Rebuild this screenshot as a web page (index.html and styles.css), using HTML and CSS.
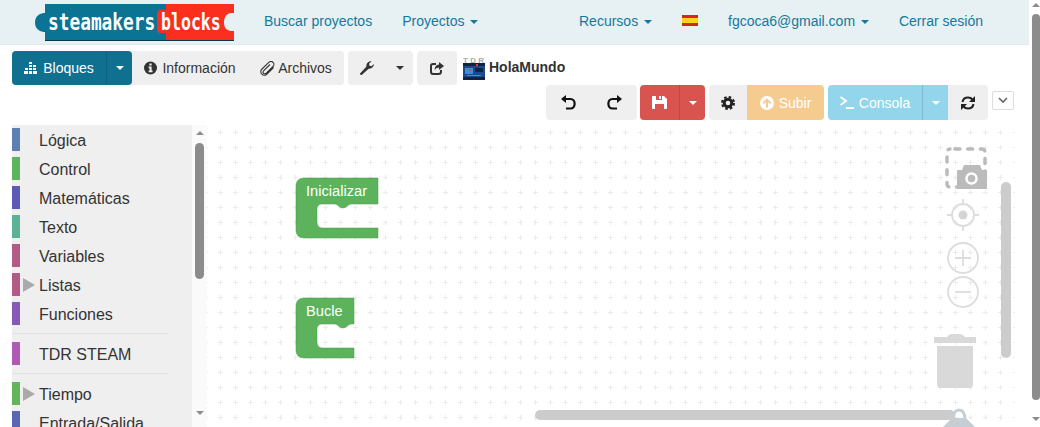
FILE: index.html
```html
<!DOCTYPE html>
<html lang="es">
<head>
    <meta charset="UTF-8">
    <title>Steamakers Blocks</title>
    <link rel="stylesheet" href="styles.css">
</head>
<body>
<div class="page">
    <nav class="navbar">
        <svg class="logo" width="199" height="37" viewBox="35 4 199 37">
            <path fill="#0b7393" d="M45 4H196V41H45V32C41 32 35 30 35 22.500C35 15 41 13 45 13Z"/>
            <path fill="#03394d" d="M45 40H234V41H45Z"/>
            <path fill="#fb2f1e" d="M166 4H234V13H232C226 13 224 18 224 22.500C224 27 226 31 232 31H234V40H166V33H161C158 33 157 31 157 29V15C157 12 158 10 161 10H166Z"/>
            <text class="logo-text" transform="translate(48 29.500) scale(.775 1)">steamakers</text>
            <text class="logo-text" transform="translate(161 29.500) scale(.72 1)">blocks</text>
        </svg>
        <a class="nav-link" href="#">Buscar proyectos</a>
        <a class="nav-link" href="#">Proyectos <span class="caret"></span></a>
        <div class="nav-right">
            <a class="nav-link" href="#">Recursos <span class="caret"></span></a>
            <span class="flag"></span>
            <a class="nav-link" href="#">fgcoca6@gmail.com <span class="caret"></span></a>
            <a class="nav-link" href="#">Cerrar sesión</a>
        </div>
    </nav>

    <div class="toolbar-top">
        <div class="btn-group tabs">
            <div class="btn-group">
                <button class="btn btn-blue btn-bloques">
                    <svg width="13" height="12" viewBox="0 0 13 12" fill="#fff"><path d="M5 0h3v2H5zM5 3h3v2H5zM5 6h3v2H5zM5 9h3v3H5zM1 6h3v2H1zM1 9h3v3H1zM9 3h3v2H9zM9 6h3v2H9zM9 9h3v3H9zM0 9h1v3H0zM12 9h1v3h-1z"/></svg>
                    Bloques
                </button>
                <button class="btn btn-blue btn-split"><span class="caret"></span></button>
            </div>
            <button class="btn btn-info-tab">
                <svg width="13" height="14" viewBox="0 0 14 14"><circle cx="7" cy="7" r="7" fill="#333"/><path fill="#efefef" d="M5.800 2.200h2.400v2H5.800zM5 5.500h3.200v4.300h1V11.500H5V9.800h1V7.200H5z"/></svg>
                Información
            </button>
            <button class="btn btn-files">
                <svg width="15" height="15" viewBox="0 0 15 15" fill="none" stroke="#333" stroke-width="1.100"><path d="M13.500 6.500 6.500 13.500C4.500 15 1 14 .8 11 .7 10 1 9 2 8L8.500 1.700C10 .3 12 .3 13 1.300 14.300 2.600 14 4.500 13 5.500L6.300 12.200C5 13.400 3.200 12.600 3 11.300 3 10.500 3.300 10 4 9.300L10 3.500"/></svg>
                Archivos
            </button>
        </div>
        <div class="btn-group">
            <button class="btn btn-wrench">
                <svg width="14" height="14" viewBox="0 0 14 14" fill="#333"><path d="M0 12.500 6.500 5.600C6 3 8 0 11.500 .3L9 2.800 9.500 4.800 11.500 5.300 13.900 2.900C14 6 11.500 8.200 8.600 7.700L2 13.800C1 14.400-.3 13.500 0 12.500Z"/></svg>
            </button>
            <button class="btn btn-wrench-caret"><span class="caret"></span></button>
        </div>
        <button class="btn btn-export">
            <svg width="14" height="13" viewBox="0 0 14 13" fill="none" stroke="#333" stroke-width="2"><path d="M6 2H3C1.800 2 1 2.800 1 4V9.500C1 10.800 1.800 12 3 12H8.500C10 12 11 11 11 9.500V8"/><path fill="#333" stroke="none" d="M9 0 14 4 9 8V5.800C7 5.800 5.500 6.300 4.800 8.300 4.500 5 6.300 2.800 9 2.500Z"/></svg>
        </button>
        <svg class="board" width="22" height="24" viewBox="0 0 22 24">
            <text class="board-label" x="0" y="6.500" textLength="21">TDR</text>
            <path fill="#1a4a8c" d="M0 7h22v17H0z"/>
            <path fill="#0d2244" d="M0 7h22v3H0zM0 21h22v3H0zM12 12h8v4h-8z"/>
            <path fill="#3f8fd0" d="M2 12h8v6H2zM4 19h14v1H4z"/>
            <path fill="#c44" d="M13 8h2v2h-2zM6 13h2v2H6z"/>
        </svg>
        <span class="project-name">HolaMundo</span>
    </div>

    <div class="toolbar-bottom">
        <div class="btn-group">
            <button class="btn btn-arrow">
                <svg width="15" height="15" viewBox="0 0 15 15" fill="none" stroke="#111" stroke-width="2.200"><path d="M3 4H9.500C15 4 15 13.500 9.500 13.500H5"/><path fill="#111" stroke="none" d="M5 0V8L0 4Z"/></svg>
            </button>
            <button class="btn btn-arrow">
                <svg width="15" height="15" viewBox="0 0 15 15" fill="none" stroke="#111" stroke-width="2.200"><path d="M12 4H5.500C0 4 0 13.500 5.500 13.500H10"/><path fill="#111" stroke="none" d="M10 0V8L15 4Z"/></svg>
            </button>
        </div>
        <div class="btn-group">
            <button class="btn btn-red btn-save">
                <svg width="15" height="13" viewBox="0 0 15 13" fill="#fff"><path d="M1 0H4V4H10V0H12L15 3V12C15 12.600 14.600 13 14 13H12V8H3V13H1C.4 13 0 12.600 0 12V1C0 .4 .4 0 1 0ZM7 0H9V3H7Z"/></svg>
            </button>
            <button class="btn btn-red btn-split"><span class="caret"></span></button>
        </div>
        <div class="btn-group">
            <button class="btn btn-gear">
                <svg width="14" height="14" viewBox="0 0 14 14" fill="none" stroke="#222"><circle cx="7" cy="7" r="3.800" stroke-width="3"/><circle cx="7" cy="7" r="6" stroke-width="2" stroke-dasharray="2.600 2.110"/></svg>
            </button>
            <button class="btn btn-orange">
                <svg width="14" height="14" viewBox="0 0 14 14"><circle cx="7" cy="7" r="7" fill="#fff"/><path fill="#f6cb8f" d="M7 2.300 11.300 6.800 10 8 8 6V11.500H6V6L4 8 2.700 6.800Z"/></svg>
                Subir
            </button>
        </div>
        <div class="btn-group">
            <button class="btn btn-cyan btn-console">
                <svg width="14" height="13" viewBox="0 0 14 13" fill="none" stroke="#fff" stroke-width="2"><path d="M.5 1 6 5 .5 9"/><path d="M6 12H14"/></svg>
                Consola
            </button>
            <button class="btn btn-cyan btn-split"><span class="caret"></span></button>
            <button class="btn btn-refresh">
                <svg width="14" height="14" viewBox="0 0 14 14" fill="none" stroke="#222" stroke-width="2"><path d="M1.500 6C2 3 4.500 1.500 7 1.500 9 1.500 10.500 2.300 11.500 3.500"/><path d="M12.500 8C12 11 9.500 12.500 7 12.500 5 12.500 3.500 11.700 2.500 10.500"/><path fill="#222" stroke="none" d="M14 0V6H8ZM0 14V8H6Z"/></svg>
            </button>
        </div>
        <button class="btn-collapse">
            <svg width="10" height="7" viewBox="0 0 10 7" fill="none" stroke="#666" stroke-width="1.600"><path d="M1 1 5 5 9 1"/></svg>
        </button>
    </div>

    <div class="editor">
        <aside class="toolbox">
            <ul class="category-list">
                <li class="category"><span class="swatch c-logic"></span>Lógica</li>
                <li class="category"><span class="swatch c-control"></span>Control</li>
                <li class="category"><span class="swatch c-math"></span>Matemáticas</li>
                <li class="category"><span class="swatch c-text"></span>Texto</li>
                <li class="category"><span class="swatch c-vars"></span>Variables</li>
                <li class="category has-sub"><span class="swatch c-vars"></span><span class="arrow"></span>Listas</li>
                <li class="category"><span class="swatch c-func"></span>Funciones</li>
                <li class="separator"></li>
                <li class="category"><span class="swatch c-tdr"></span>TDR STEAM</li>
                <li class="separator"></li>
                <li class="category has-sub"><span class="swatch c-time"></span><span class="arrow"></span>Tiempo</li>
                <li class="category"><span class="swatch c-io"></span>Entrada/Salida</li>
            </ul>
            <div class="toolbox-scroll">
                <span class="arrow-up"></span>
                <span class="toolbox-thumb"></span>
                <span class="arrow-down"></span>
            </div>
        </aside>

        <svg class="workspace" width="822" height="302" viewBox="207 125 822 302">
            <defs>
                <pattern id="grid" x="3" y="5" width="15" height="15" patternUnits="userSpaceOnUse">
                    <path stroke="#ebebeb" stroke-width="1" d="M5 7.500H10M7.500 5V10"/>
                </pattern>
            </defs>
            <rect x="207" y="125" width="808" height="302" fill="url(#grid)"/>

            <!-- blocks -->
            <path class="block" d="M304 178H378V204H351C348 204 347 208 343 208 339 208 338 204 335 204H322C319 204 317 206 317 209V222C317 225 319 228 322 228H378V238H304C299 238 296 235 296 230V186C296 181 299 178 304 178Z"/>
            <text class="block-label" x="306" y="196">Inicializar</text>
            <path class="block" d="M304 298H354V324H351C348 324 347 328 343 328 339 328 338 324 335 324H322C319 324 317 326 317 329V342C317 345 319 348 322 348H354V358H304C299 358 296 355 296 350V306C296 301 299 298 304 298Z"/>
            <text class="block-label" x="306" y="316">Bucle</text>

            <!-- camera -->
            <rect x="947" y="149" width="38" height="38" rx="3" fill="none" stroke="#bbb" stroke-width="3.500" stroke-linecap="round" stroke-dasharray="5 7.670" stroke-dashoffset="-5"/>
            <path fill="#bbb" d="M957 170H962L964 165H980L982 170H987V189H957Z"/>
            <circle cx="971.500" cy="178.500" r="5" fill="none" stroke="#fff" stroke-width="2.500"/>

            <!-- target, zoom -->
            <g fill="none" stroke="#ddd" stroke-width="1.800">
                <circle cx="963" cy="215" r="11"/>
                <path d="M963 199V204M963 226V231M947 215H952M974 215H979"/>
                <circle cx="963" cy="258" r="15"/>
                <path d="M955 258H971M963 250V266"/>
                <circle cx="963" cy="292" r="15"/>
                <path d="M955 292H971"/>
            </g>
            <circle cx="963" cy="215" r="4.500" fill="#d4d4d4"/>

            <!-- trash -->
            <path fill="#d9d9d9" d="M934 337H947C949 334 951 334 955 334H958C962 334 963 335 965 337H976V343H934ZM937 346H973V384C973 387 971 388 969 388H941C939 388 937 387 937 384Z"/>

            <!-- workspace scrollbars -->
            <rect x="1001" y="182" width="10" height="176" rx="5" fill="#ccc"/>
            <path fill="#c5ced4" d="M943 427 952 418H966L975 427Z"/>
            <path fill="none" stroke="#c5ced4" stroke-width="3" d="M953 420C953 413 955 410 959 410 963 410 965 413 965 420"/>
            <rect x="535" y="410" width="420" height="10" rx="5" fill="#ccc"/>
        </svg>
    </div>
</div>

<div class="page-scroll">
    <span class="arrow-up"></span>
    <span class="page-thumb"></span>
    <span class="arrow-down"></span>
</div>
</body>
</html>
```

FILE: styles.css
```css
* {
    box-sizing: border-box;
    margin: 0;
    padding: 0;
}

html, body {
    height: 100%;
    overflow: hidden;
}

body {
    display: flex;
    font-family: "Liberation Sans", Arial, sans-serif;
    font-size: 14px;
    color: #333;
    background: #fff;
}

.page {
    width: 1029px;
    display: flex;
    flex-direction: column;
}

/* navbar */
.navbar {
    height: 45px;
    flex: none;
    display: flex;
    align-items: center;
    padding: 0 0 2px 35px;
    background: #e7f0f3;
    border-bottom: 1px solid #e0e8eb;
}

.logo {
    flex: none;
    margin-top: 3px;
}

.logo-text {
    font-family: "DejaVu Sans Mono", monospace;
    font-size: 23px;
    font-weight: bold;
    fill: #fff;
}

.nav-link {
    color: #137a9c;
    text-decoration: none;
    white-space: nowrap;
    margin-left: 30px;
}

.nav-right {
    margin-left: auto;
    padding-right: 46px;
    display: flex;
    align-items: center;
}

.flag {
    width: 16px;
    height: 11px;
    margin-left: 30px;
    margin-top: -2px;
    background: linear-gradient(#d8261c 27%, #f7d618 27%, #f7d618 73%, #d8261c 73%);
}

.caret {
    display: inline-block;
    width: 0;
    height: 0;
    margin-left: 2px;
    vertical-align: middle;
    border-top: 4px solid;
    border-left: 4px solid transparent;
    border-right: 4px solid transparent;
}

/* toolbars */
.toolbar-top {
    display: flex;
    align-items: center;
    gap: 4px;
    height: 34px;
    margin-top: 6px;
    padding-left: 12px;
    flex: none;
}

.toolbar-bottom {
    display: flex;
    gap: 4px;
    height: 35px;
    justify-content: flex-end;
    padding-right: 15px;
    flex: none;
}

.toolbar-bottom .btn-group:first-child {
    margin-right: -1px;
}

.btn-group {
    display: flex;
    height: 100%;
}

.tabs {
    background: #efefef;
    border-radius: 4px;
}

.btn {
    height: 100%;
    display: flex;
    align-items: center;
    justify-content: center;
    gap: 5px;
    border: none;
    background: #efefef;
    color: #333;
    font-family: inherit;
    font-size: 14px;
}

.btn-group .btn:first-child {
    border-radius: 4px 0 0 4px;
}

.btn-group .btn:last-child {
    border-radius: 0 4px 4px 0;
}

.btn .caret {
    margin: 0;
}

.btn-split {
    width: 26px;
    border-left: 1px solid rgba(0, 0, 0, 0.12);
    color: #fff;
}

.btn-blue {
    background: #10708f;
    color: #fff;
}

.btn-red {
    background: #d9534f;
    color: #fff;
}

.btn-orange {
    background: #f6cb8f;
    color: #fff;
    width: 77px;
}

.btn-cyan {
    background: #93d5ea;
    color: #fff;
}

.btn-bloques {
    width: 94px;
    gap: 6px;
}

.btn-info-tab {
    width: 116px;
}

.btn-files {
    width: 96px;
    gap: 3px;
}

.btn-wrench {
    width: 38px;
}

.btn-wrench-caret {
    width: 27px;
}

.btn-export {
    width: 40px;
    border-radius: 4px;
}

.board {
    margin-left: 2px;
}

.board-label {
    font-size: 8px;
    font-weight: bold;
    fill: #aaa;
}

.project-name {
    font-weight: bold;
    color: #333;
    margin-top: -2px;
}

.btn-arrow {
    width: 45.500px;
}

.btn-save {
    width: 39px;
}

.btn-gear {
    width: 38px;
}

.btn-console {
    width: 94px;
}

.btn-refresh {
    width: 40px;
}

.btn-collapse {
    width: 22px;
    height: 19px;
    margin-top: 6px;
    display: flex;
    align-items: center;
    justify-content: center;
    background: #fff;
    border: 1px solid #ddd;
    border-radius: 2px;
}

/* editor */
.editor {
    flex: 1;
    min-height: 0;
    display: flex;
    margin-top: 5px;
    padding-left: 12px;
    overflow: hidden;
}

.toolbox {
    width: 195px;
    flex: none;
    display: flex;
    overflow: hidden;
}

.category-list {
    width: 180px;
    flex: none;
    list-style: none;
    background: #efefef;
    padding-top: 3px;
    font-size: 16px;
}

.category {
    height: 23px;
    margin-bottom: 6px;
    display: flex;
    align-items: flex-start;
    line-height: 25px;
    white-space: nowrap;
}

.swatch {
    width: 8px;
    height: 23px;
    margin-right: 19px;
    flex: none;
}

.has-sub .swatch {
    margin-right: 3px;
}

.arrow {
    width: 0;
    height: 0;
    margin: 5px 4px 0 0;
    border-left: 12px solid #aaa;
    border-top: 7px solid transparent;
    border-bottom: 7px solid transparent;
}

.separator {
    width: 156px;
    height: 1px;
    margin: 8px 0;
    background: #e3e3e3;
}

.c-logic { background: #5b80b2; }
.c-control { background: #5cb45c; }
.c-math { background: #5b5bb5; }
.c-text { background: #5bb295; }
.c-vars { background: #b25b85; }
.c-func { background: #855bb5; }
.c-tdr { background: #ae5bb5; }
.c-time { background: #64b45c; }
.c-io { background: #5b67b5; }

.toolbox-scroll {
    width: 15px;
    display: flex;
    flex-direction: column;
    align-items: center;
    padding-top: 6px;
    background: #fafafa;
}

.toolbox-thumb {
    width: 9px;
    height: 136px;
    margin-top: 8px;
    border-radius: 5px;
    background: #8c8c8c;
}

.arrow-up, .arrow-down {
    width: 0;
    height: 0;
    border-left: 4px solid transparent;
    border-right: 4px solid transparent;
}

.arrow-up {
    border-bottom: 4px solid #8c8c8c;
}

.arrow-down {
    margin-top: 132px;
    border-top: 4px solid #8c8c8c;
}

.workspace {
    flex: none;
}

.block {
    fill: #5cb35c;
    stroke: #4a9a4a;
    stroke-width: 0.500;
}

.block-label {
    font-size: 14.670px;
    fill: #fff;
}

/* window scrollbar */
.page-scroll {
    width: 11px;
    flex: none;
    display: flex;
    flex-direction: column;
    align-items: center;
    padding: 3px 0 0 3px;
    background: #fff;
}

.page-thumb {
    width: 8px;
    height: 386px;
    margin-top: 7px;
    border-radius: 4px;
    background: #8c8c8c;
}

.page-scroll .arrow-down {
    margin-top: 17px;
}
```
